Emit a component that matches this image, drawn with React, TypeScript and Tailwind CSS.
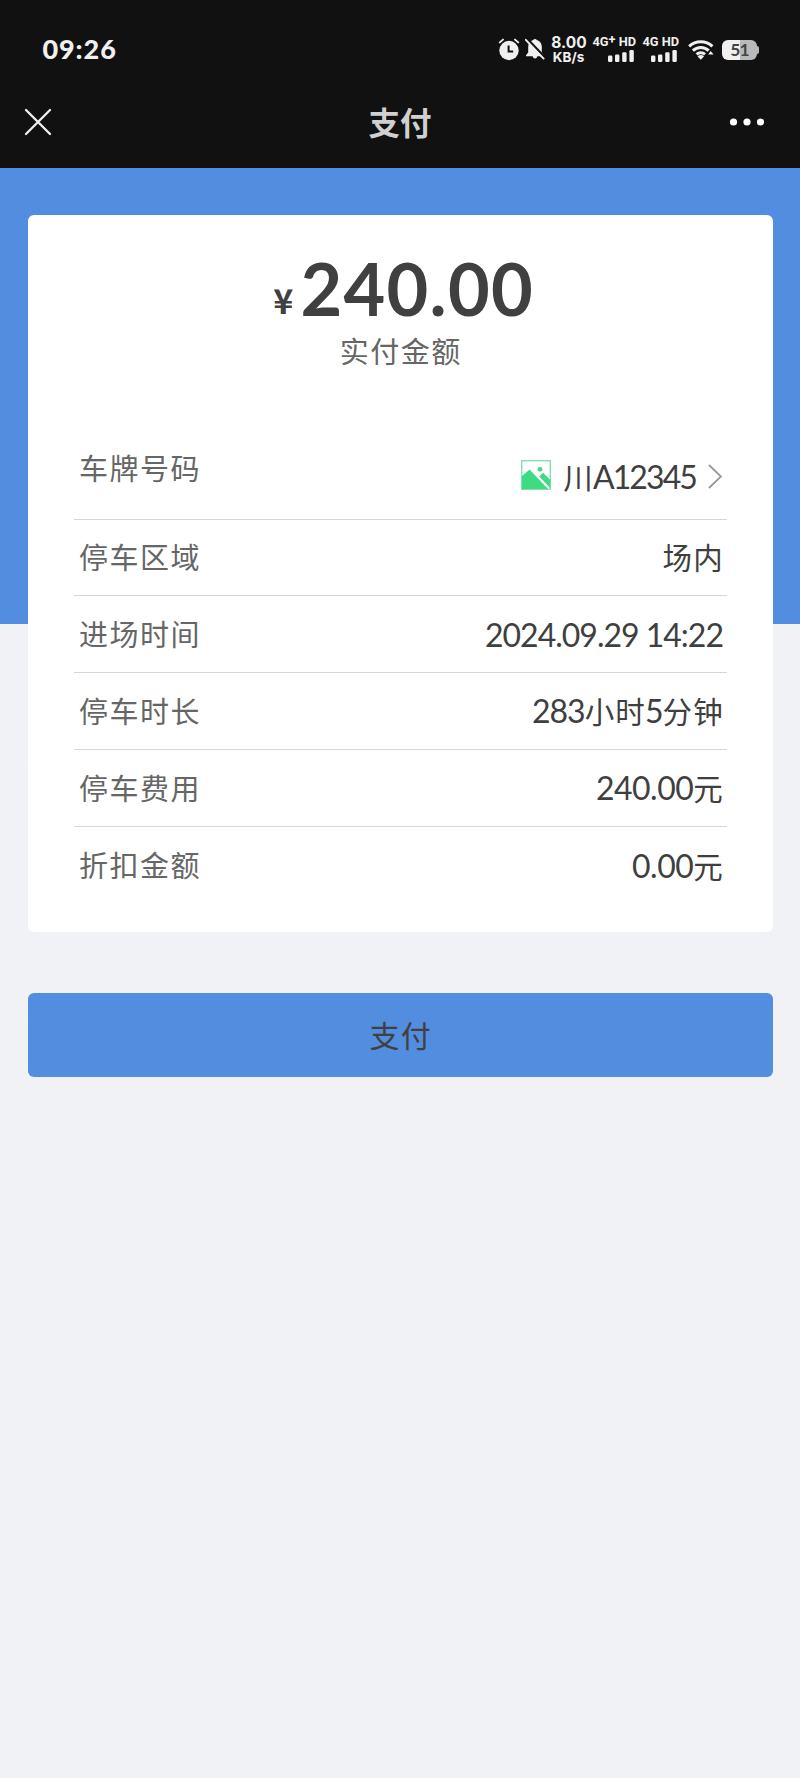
import React from "react";

const CJK = "font-['Lato','Noto_Sans_CJK_SC',sans-serif]";

function AlarmIcon() {
  return (
    <svg className="h-6 w-[22px] shrink-0" viewBox="0 0 22 24" fill="none">
      <circle cx="11" cy="13.5" r="9.7" fill="#f0f0f0" />
      <path d="M1.800 5.400 5 2.600M20.200 5.400 17 2.600" stroke="#f0f0f0" strokeWidth="1.900" strokeLinecap="round" />
      <path d="M10.600 8.400v6h4.600" stroke="#111" strokeWidth="2" />
    </svg>
  );
}

function MutedBellIcon() {
  return (
    <svg className="h-6 w-5 shrink-0" viewBox="0 0 20 24">
      <path
        d="M10 2a2 2 0 0 0-1.800 1.100C5 4 3.200 6.600 3.200 9.800v5.700L1 18.300v1h6.700c.3 1.400 1.200 2.200 2.300 2.200s2-.8 2.300-2.200H19v-1l-2.200-2.800V9.800c0-3.200-1.800-5.800-5-6.700A2 2 0 0 0 10 2z"
        fill="#f0f0f0"
      />
      <path d="M1.200.8 20 20.400" stroke="#111" strokeWidth="2.400" />
      <path d="M.8 2.800 18.600 21.600" stroke="#f0f0f0" strokeWidth="1.900" strokeLinecap="round" />
    </svg>
  );
}

function Signal({ label, width }: { label: React.ReactNode; width: string }) {
  return (
    <div className={`flex flex-col items-end ${width}`}>
      <div className="h-[13px] whitespace-nowrap font-['Roboto',sans-serif] text-[12.800px] leading-[12px] font-bold">
        {label}
      </div>
      <svg className="mt-[1px] mr-[2px] h-3 w-[26px]" viewBox="0 0 26 12" fill="#f0f0f0">
        <rect x="0" y="5.500" width="4.400" height="6.500" rx="1.300" />
        <rect x="7" y="4.500" width="4.400" height="7.500" rx="1.300" />
        <rect x="14.200" y="2.300" width="4.400" height="9.700" rx="1.300" />
        <rect x="21.400" y="0" width="4.400" height="12" rx="1.300" />
      </svg>
    </div>
  );
}

function WifiIcon() {
  return (
    <svg className="h-[22px] w-[26px] shrink-0" viewBox="0 0 26 22" fill="none" stroke="#f0f0f0" strokeWidth="3.100">
      <path d="M1.200 7.300a17 17 0 0 1 23.200 0" />
      <path d="M4.900 11.600a11.500 11.500 0 0 1 15.800 0" />
      <path d="M8.600 15.400a6.300 6.300 0 0 1 8.400 0" />
      <path d="M12.800 20.800 9.600 17.400a4.600 4.600 0 0 1 6.400 0z" fill="#f0f0f0" stroke="none" />
      <path d="m22.700 12 2.900 3.600h-5.400z" fill="#f0f0f0" stroke="none" />
    </svg>
  );
}

function Battery() {
  return (
    <div className="flex items-center">
      <div className="flex h-5 w-[35px] items-center justify-center rounded-[6px] bg-linear-to-r from-[#f0f0f0] from-51% to-[#b9b9b9] to-51% font-['Lato',sans-serif] text-[17.500px] leading-5 font-bold tracking-[-1px] text-[#444]">
        51
      </div>
      <div className="h-2 w-[2px] rounded-r-[2px] bg-[#b9b9b9]" />
    </div>
  );
}

function PictureIcon() {
  return (
    <svg className="-mt-[5px] h-[30px] w-[30px] shrink-0" viewBox="0 0 30 30">
      <rect x=".75" y=".75" width="28.500" height="28.500" fill="#fff" stroke="#6ddca2" strokeWidth="1.200" />
      <path d="M1 16 8.600 9.400 27 29H1z" fill="#3ddc84" />
      <path d="M18.200 16.500 22 12.700l7.200 7V28z" fill="#3ddc84" />
      <circle cx="19" cy="9.300" r="2.400" fill="#3ddc84" />
    </svg>
  );
}

function Row({ label, children, last }: { label: string; children: React.ReactNode; last?: boolean }) {
  return (
    <div
      className={`flex h-[76.800px] items-center justify-between pt-[2px] pr-[4px] pl-[4.500px] ${last ? "" : "border-b-[1.500px] border-[#d6d6d6]"}`}
    >
      <span className="text-[29px] leading-10 tracking-[1.500px] text-[#666]">{label}</span>
      <span className="flex items-baseline text-[32px] leading-10 text-[#3f3f3f]">{children}</span>
    </div>
  );
}

function Han({ children }: { children: string }) {
  return <span className="-mr-[1px] text-[29.500px] tracking-[1.200px]">{children}</span>;
}

function Num({ children, tight }: { children: string; tight?: boolean }) {
  return <span className={tight ? "tracking-[-1px]" : "tracking-[-0.500px]"}>{children}</span>;
}

export default function App() {
  return (
    <div className={`flex h-[1778px] w-[800px] flex-col overflow-hidden bg-[#f0f2f6] ${CJK}`}>
      <header className="h-[167.500px] shrink-0 bg-[#111] text-[#f0f0f0]">
        <div className="flex h-[78px] items-start pt-[36px] pr-[41px] pl-[42.500px]">
          <div className="mt-[-1px] text-[27px] leading-[28px] font-black tracking-[0.900px]">09:26</div>
          <div className="ml-auto flex items-start">
            <div className="mt-[1px] flex gap-[5px]">
              <AlarmIcon />
              <MutedBellIcon />
            </div>
            <div className="ml-[6px] flex w-[36px] flex-col items-center font-['Inter',sans-serif] leading-[14px] font-bold">
              <span className="text-[15.500px]">8.00</span>
              <span className="-ml-[1px] text-[13.500px]">KB/s</span>
            </div>
            <div className="ml-[6px] flex">
              <Signal width="w-[43px]" label={<>4G<span className="relative -top-[2px]">+</span> HD</>} />
              <div className="w-[6px]" />
              <Signal width="w-[37px]" label="4G HD" />
            </div>
            <div className="mt-[3px] ml-[9px]">
              <WifiIcon />
            </div>
            <div className="mt-[4px] ml-[8px]">
              <Battery />
            </div>
          </div>
        </div>
        <div className="flex h-[89px] items-center justify-between pr-[35px] pb-[1px] pl-[24px]">
          <svg className="h-[28px] w-[36px]" viewBox="0 0 36 28" stroke="#f0f0f0" strokeWidth="2.300" strokeLinecap="round">
            <path d="M2 2 26 26M26 2 2 26" />
          </svg>
          <h1 className="mt-[2px] -mr-[11px] text-[31.500px] leading-10 font-bold text-[#d0d0d0]">支付</h1>
          <svg className="h-2 w-[36px]" viewBox="0 0 36 8" fill="#fff">
            <circle cx="4.500" cy="4" r="3.600" />
            <circle cx="18" cy="4" r="3.600" />
            <circle cx="31.500" cy="4" r="3.600" />
          </svg>
        </div>
      </header>

      <main className="flex-1 bg-linear-to-b from-[#538ddf] from-[456px] to-[#f0f2f6] to-[456px] pt-[47.500px] pr-[27px] pl-[28.400px]">
        <section className="h-[717px] rounded-[6px] bg-white px-[46px]">
          <div className="flex h-[114px] items-baseline justify-center pt-[29px] pl-[6px] text-[#404040]">
            <span className="relative -top-[2px] mr-[7px] font-['Noto_Sans_CJK_SC',sans-serif] text-[34px] font-bold">
              ¥
            </span>
            <span className="text-[72px] leading-[88px] font-bold tracking-[1.300px]">240.00</span>
          </div>
          <div className="pt-[3px] text-center text-[29px] leading-10 tracking-[1.500px] text-[#666]">实付金额</div>

          <div className="mt-[58px]">
            <div className="flex h-[89.500px] items-start justify-between border-b-[1.500px] border-[#d6d6d6] pt-[19px] pr-[5px] pl-[4.500px]">
              <span className="text-[29px] leading-10 tracking-[1.500px] text-[#666]">车牌号码</span>
              <div className="mt-[8px] flex items-center text-[#3f3f3f]">
                <PictureIcon />
                <span className="ml-[12px] flex items-baseline text-[32px] leading-10">
                  <Han>川</Han>
                  <span className="tracking-[-1.900px]">A12345</span>
                </span>
                <svg
                  className="-mt-[2px] ml-[12px] h-[25px] w-[14px]"
                  viewBox="0 0 14 25"
                  fill="none"
                  stroke="#999"
                  strokeWidth="1.800"
                >
                  <path d="M1 1 13 12.500 1 24" />
                </svg>
              </div>
            </div>
            <Row label="停车区域">
              <Han>场内</Han>
            </Row>
            <Row label="进场时间">
              <Num tight>2024.09.29 14:22</Num>
            </Row>
            <Row label="停车时长">
              <Num tight>283</Num>
              <Han>小时</Han>
              <Num tight>5</Num>
              <Han>分钟</Han>
            </Row>
            <Row label="停车费用">
              <Num>240.00</Num>
              <Han>元</Han>
            </Row>
            <Row label="折扣金额" last>
              <Num>0.00</Num>
              <Han>元</Han>
            </Row>
          </div>
        </section>

        <button className="mt-[61px] flex h-[84px] w-full items-center justify-center rounded-[6px] bg-[#538ddf] text-[30px] tracking-[1.200px] text-[#404040]">
          支付
        </button>
      </main>
    </div>
  );
}
